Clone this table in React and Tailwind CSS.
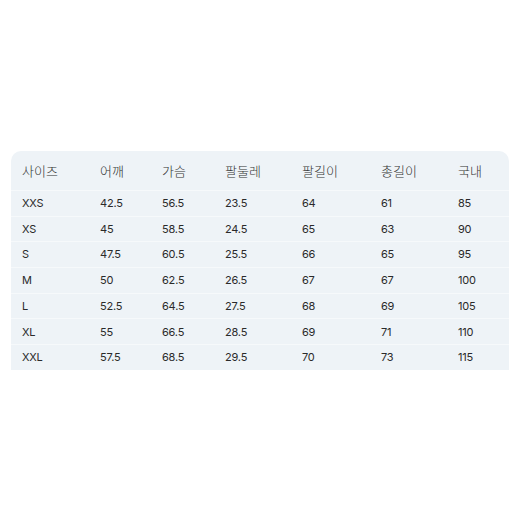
import React from "react";

const headers = ["사이즈", "어깨", "가슴", "팔둘레", "팔길이", "총길이", "국내"];
const rows = [
  ["XXS", "42.5", "56.5", "23.5", "64", "61", "85"],
  ["XS", "45", "58.5", "24.5", "65", "63", "90"],
  ["S", "47.5", "60.5", "25.5", "66", "65", "95"],
  ["M", "50", "62.5", "26.5", "67", "67", "100"],
  ["L", "52.5", "64.5", "27.5", "68", "69", "105"],
  ["XL", "55", "66.5", "28.5", "69", "71", "110"],
  ["XXL", "57.5", "68.5", "29.5", "70", "73", "115"],
];

const gridCls = "grid grid-cols-[78px_62px_63px_77px_79px_77px_1fr] pl-[11px]";

export default function App() {
  return (
    <div
      className="w-[520px] h-[520px] bg-white pt-[151px] px-[11px]"
      style={{ fontFamily: 'Inter, "Noto Sans CJK KR", sans-serif' }}
    >
      <div className="bg-[#eef3f7] rounded-t-[10px] text-[#2a2a2a]">
        {/* header */}
        <div className={`${gridCls} h-[39px] items-center text-[13px] font-light text-[#333]`}>
          {headers.map((h) => (
            <span key={h} style={{ fontFamily: '"Noto Sans CJK KR", sans-serif' }}>
              {h}
            </span>
          ))}
        </div>
        {/* body */}
        {rows.map((r) => (
          <div
            key={r[0]}
            className={`${gridCls} h-[25.7px] items-center text-[11px] tracking-[-0.2px] border-t border-[#f6f9fb]`}
          >
            {r.map((c, i) => (
              <span key={i}>{c}</span>
            ))}
          </div>
        ))}
      </div>
    </div>
  );
}
